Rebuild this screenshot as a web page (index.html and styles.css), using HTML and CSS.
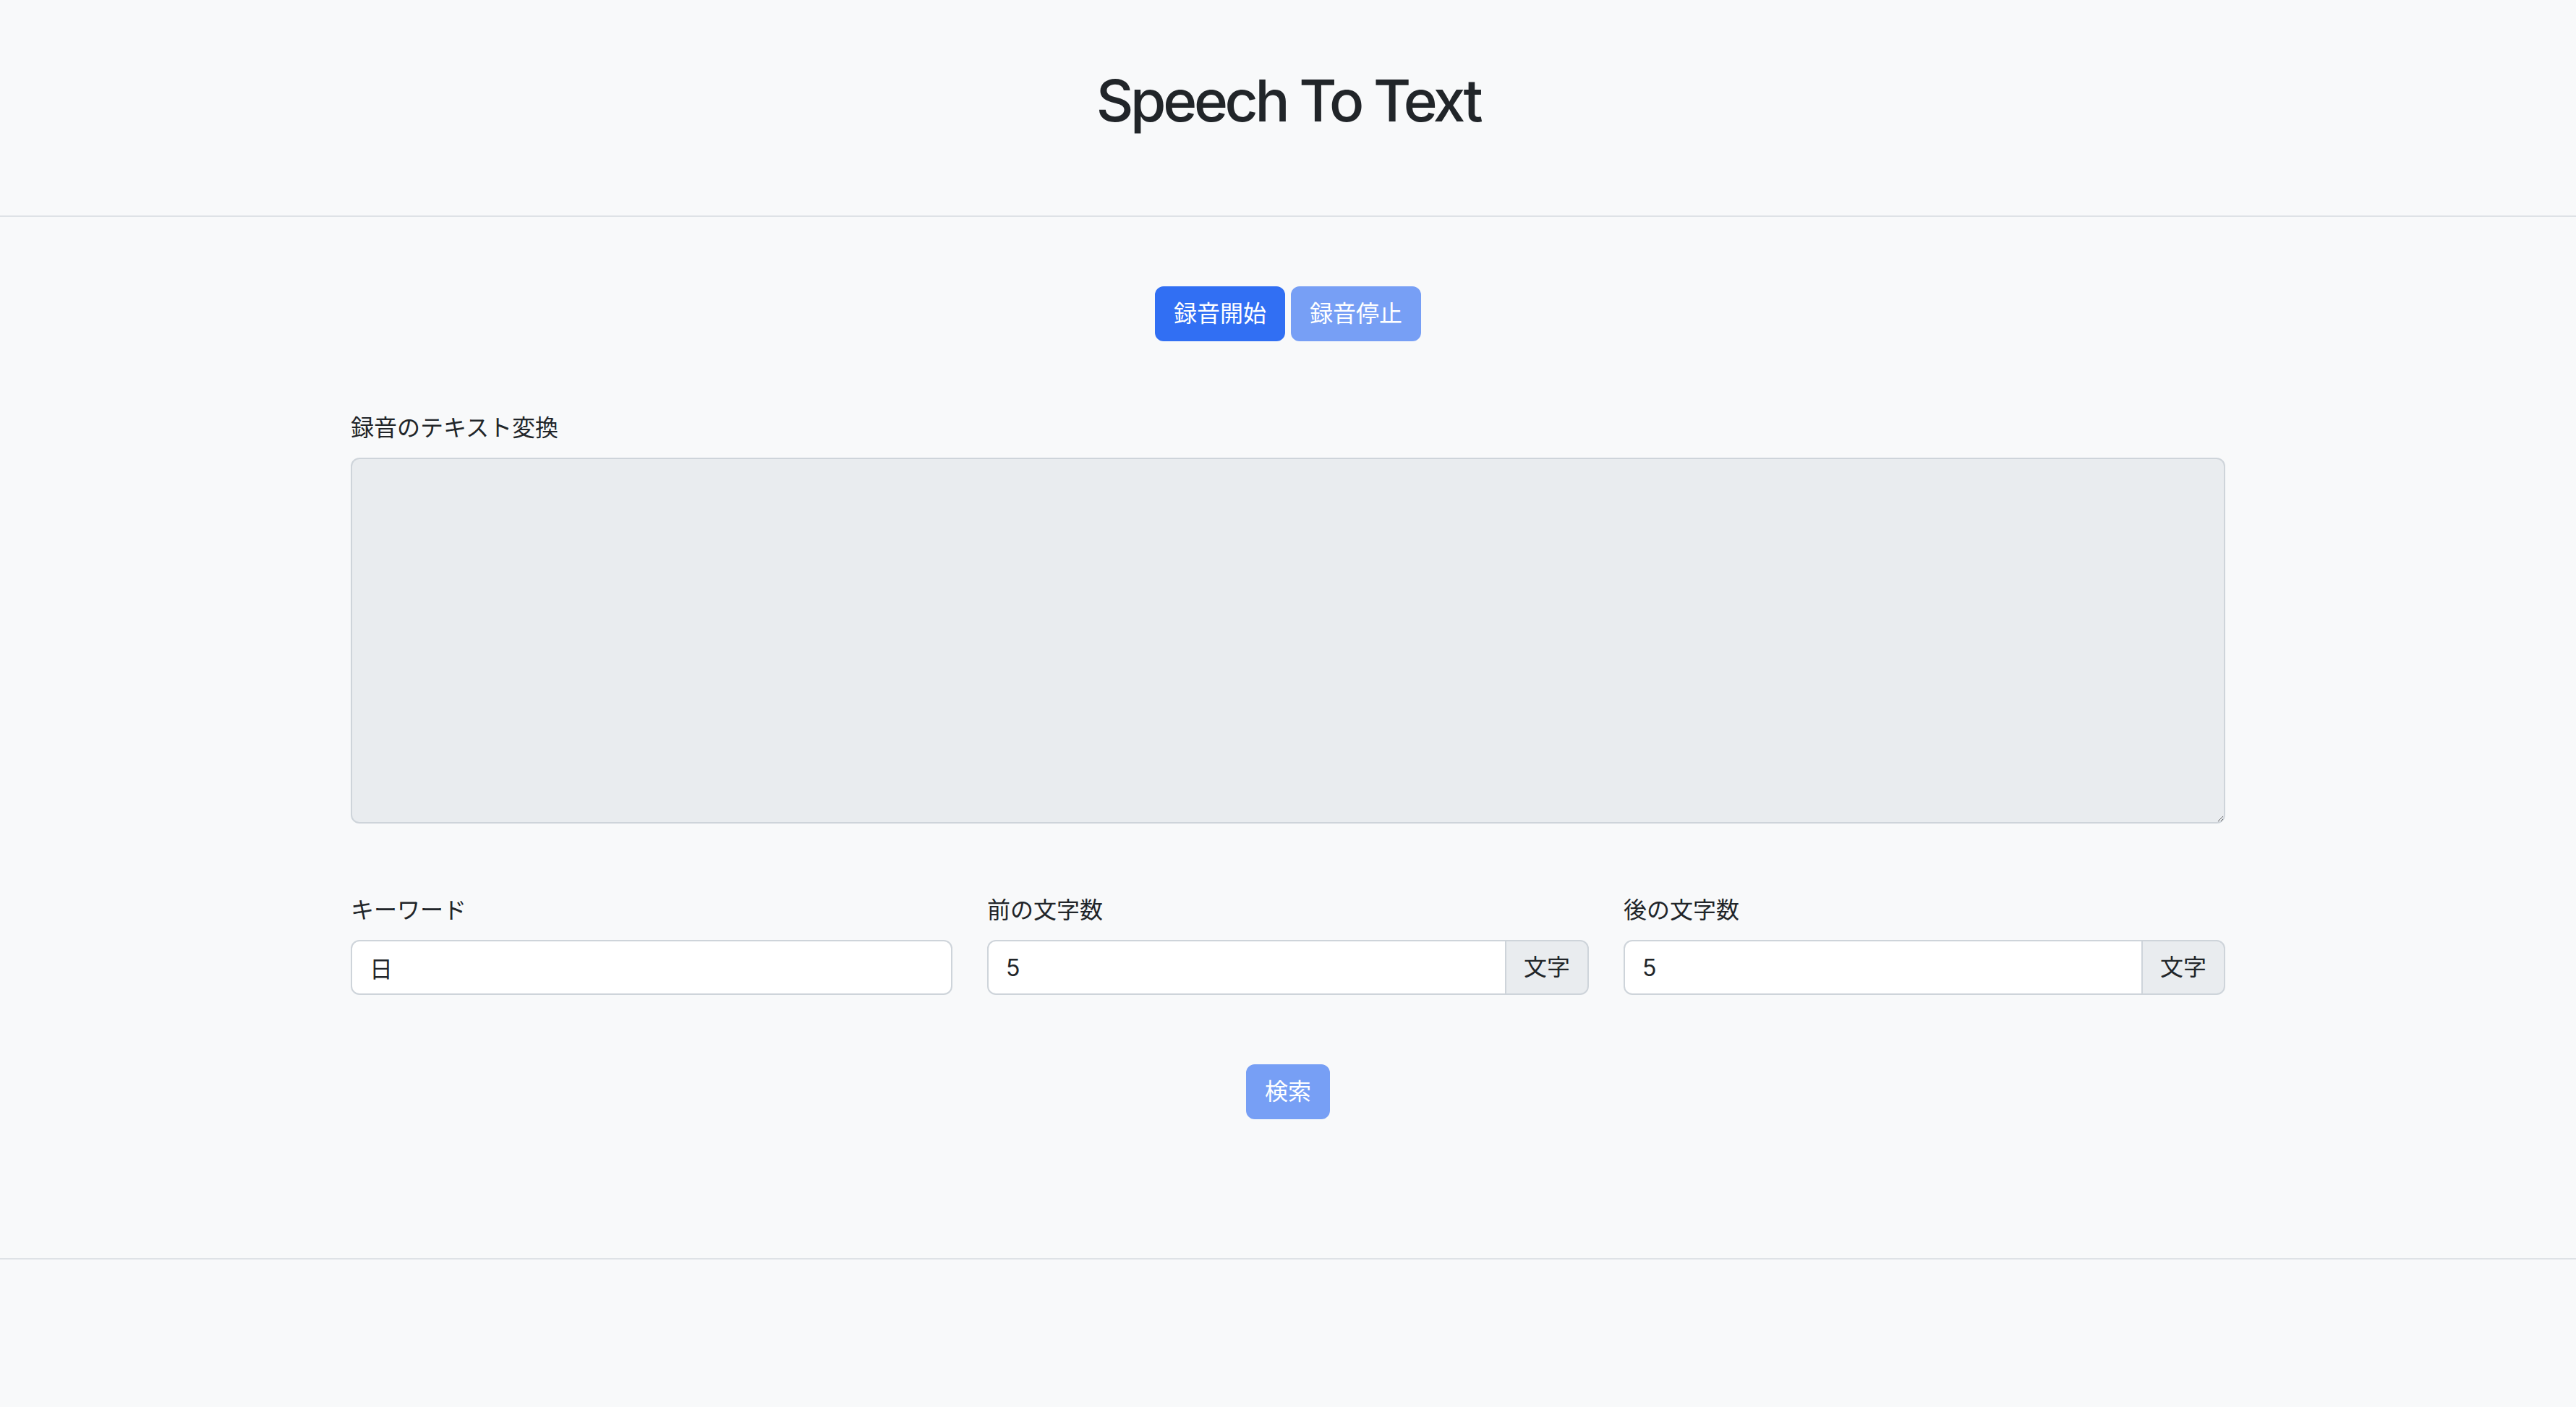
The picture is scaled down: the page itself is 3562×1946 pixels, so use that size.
FILE: index.html
```html
<!DOCTYPE html>
<html lang="ja">
<head>
<meta charset="utf-8">
<title>Speech To Text</title>
<link rel="stylesheet" href="styles.css">
</head>
<body>
<header class="site-header">
  <h1 class="site-title">Speech To Text</h1>
</header>
<main class="main">
  <div class="container">
    <div class="record-actions">
      <button class="btn btn-primary" type="button">録音開始</button>
      <button class="btn btn-primary" type="button" disabled>録音停止</button>
    </div>
    <div class="field transcript">
      <label class="field-label" for="transcript">録音のテキスト変換</label>
      <textarea id="transcript" class="form-control transcript-area" readonly></textarea>
    </div>
    <div class="search-row">
      <div class="field">
        <label class="field-label" for="keyword">キーワード</label>
        <input id="keyword" class="form-control" type="text" value="日">
      </div>
      <div class="field">
        <label class="field-label" for="before">前の文字数</label>
        <div class="input-group">
          <input id="before" class="form-control" type="text" value="5">
          <span class="input-group-text">文字</span>
        </div>
      </div>
      <div class="field">
        <label class="field-label" for="after">後の文字数</label>
        <div class="input-group">
          <input id="after" class="form-control" type="text" value="5">
          <span class="input-group-text">文字</span>
        </div>
      </div>
    </div>
    <div class="search-actions">
      <button class="btn btn-primary" type="button" disabled>検索</button>
    </div>
  </div>
</main>
<footer class="site-footer"></footer>
</body>
</html>
```
FILE: styles.css
```css
html, body {
  margin: 0;
  padding: 0;
}

body {
  background: #f8f9fa;
  color: #212529;
  font-family: Inter, "Noto Sans CJK JP", sans-serif;
  font-size: 32px;
  line-height: 48px;
  min-height: 100vh;
}

.site-header {
  padding: 91px 0 111px;
  border-bottom: 2px solid #dee2e6;
  text-align: center;
}

.site-title {
  margin: 0;
  font-size: 80px;
  line-height: 96px;
  font-weight: 500;
  letter-spacing: -4.3px;
}

.main {
  padding: 96px 0 192px;
}

.container {
  box-sizing: border-box;
  max-width: 2640px;
  margin: 0 auto;
  padding: 0 24px;
}

.record-actions,
.search-actions {
  display: flex;
  justify-content: center;
  gap: 8px;
}

.search-actions {
  margin-top: 96px;
}

.btn {
  font-family: Inter, "Noto Sans CJK JP", sans-serif;
  font-size: 32px;
  line-height: 48px;
  padding: 12px 24px;
  border: 2px solid transparent;
  border-radius: 12px;
  color: #fff;
  cursor: pointer;
}

.btn-primary {
  background: #316ff3;
  border-color: #316ff3;
}

.btn-primary:disabled {
  background: #779ff5;
  border-color: #779ff5;
  cursor: default;
}

.transcript {
  margin-top: 96px;
}

.field-label {
  display: block;
  margin-bottom: 17px;
}

.form-control {
  box-sizing: border-box;
  display: block;
  width: 100%;
  height: 76px;
  padding: 12px 24px;
  font-family: Inter, "Noto Sans CJK JP", sans-serif;
  font-size: 32px;
  line-height: 48px;
  color: #212529;
  background: #fff;
  border: 2px solid #ced4da;
  border-radius: 12px;
  outline: none;
}

.transcript-area {
  height: 506px;
  background: #e9ecef;
  resize: vertical;
}

.search-row {
  margin-top: 96px;
  display: grid;
  grid-template-columns: repeat(3, 1fr);
  column-gap: 48px;
}

.input-group {
  display: flex;
}

.input-group .form-control {
  flex: 1 1 auto;
  width: 1%;
  border-top-right-radius: 0;
  border-bottom-right-radius: 0;
}

.input-group-text {
  display: flex;
  align-items: center;
  padding: 12px 24px;
  margin-left: -2px;
  background: #e9ecef;
  border: 2px solid #ced4da;
  border-radius: 0 12px 12px 0;
  white-space: nowrap;
}

.site-footer {
  border-top: 2px solid #dee2e6;
}
```
